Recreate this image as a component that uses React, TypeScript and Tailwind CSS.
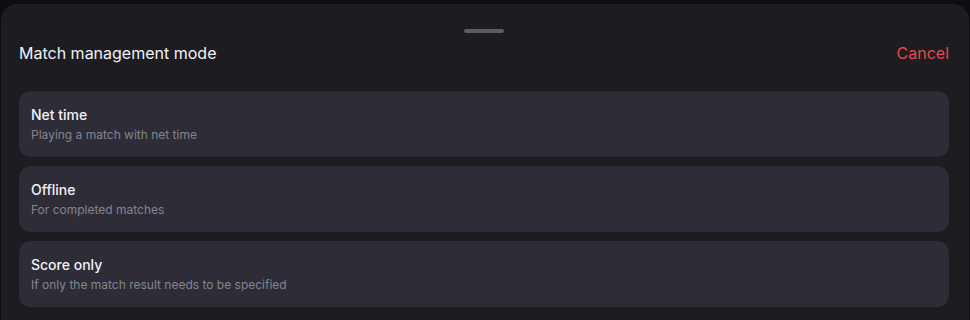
const modes = [
  { title: 'Net time', subtitle: 'Playing a match with net time' },
  { title: 'Offline', subtitle: 'For completed matches' },
  { title: 'Score only', subtitle: 'If only the match result needs to be specified' },
]

export default function App() {
  return (
    <div
      className="h-[320px] w-[970px] overflow-hidden bg-[#0e0e10] pt-1"
      style={{ fontFamily: 'Inter, "Noto Sans", sans-serif' }}
    >
      <div className="mx-px h-full rounded-t-2xl bg-[#1c1c21] pl-[18px] pr-5">
        <div className="flex justify-center pt-[25px]">
          <div className="h-1 w-10 rounded-full bg-[#5b5b60]" />
        </div>
        <div className="mt-1 flex h-8 items-center justify-between">
          <h2 className="text-base font-normal text-[#f2f2f4]">Match management mode</h2>
          <button type="button" className="text-base text-[#e5484d]">
            Cancel
          </button>
        </div>
        <div className="mt-[22px] flex flex-col gap-[9px]">
          {modes.map((mode) => (
            <div key={mode.title} className="rounded-xl bg-[#2e2c37] px-3 py-[14px]">
              <p className="text-sm font-medium leading-5 text-[#f2f2f4]">{mode.title}</p>
              <p className="mt-0.5 text-xs leading-4 text-[#85858f]">{mode.subtitle}</p>
            </div>
          ))}
        </div>
      </div>
    </div>
  )
}
